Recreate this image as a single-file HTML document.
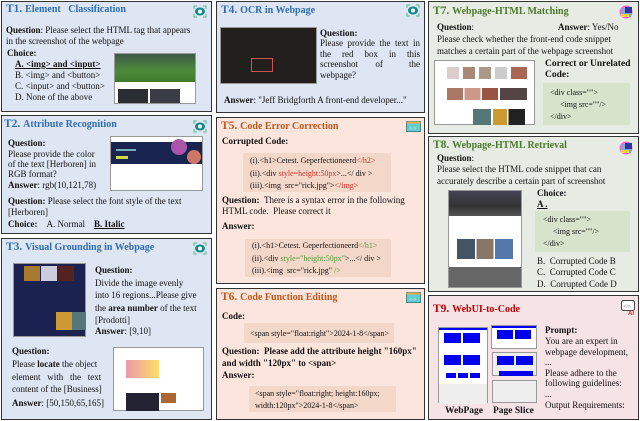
<!DOCTYPE html>
<html><head><meta charset="utf-8"><style>
*{margin:0;padding:0;box-sizing:border-box}
body{width:640px;height:421px;background:#fff;position:relative;overflow:hidden;font-family:"Liberation Serif",serif;color:#111;font-size:9px}
.p{position:absolute;border:1.5px solid #333}
.b{background:#dde6f2}.o{background:#fbe5dc}.g{background:#e6ece3}.r{background:#f6e3e6}
.t{position:absolute;font-weight:bold;font-size:11.5px;white-space:nowrap}
.t span{font-size:10px}
.tb{color:#2f6db3}.to{color:#c4561c}.tg{color:#4c7a2c}.tr{color:#c00000}
.a{position:absolute;white-space:nowrap;line-height:11px}
.bd{font-weight:bold}
.u{text-decoration:underline}
.cb{position:absolute}
.im{position:absolute;border:1px solid #999}
.red{color:#d9302a}.grn{color:#5a9a3a}
.ic{position:absolute}
</style></head><body>

<!-- T1 -->
<div class="p b" style="left:1px;top:1px;width:211px;height:111px"></div>
<div class="t tb" style="left:6px;top:3px">T1. <span>Element &nbsp;&nbsp;Classification</span></div>
<svg class="ic" style="left:193px;top:5px" width="14" height="13"><path d="M1 4V1H4M10 1H13V4M13 9V12H10M4 12H1V9" stroke="#5b8" fill="none"/><ellipse cx="7" cy="6.5" rx="5" ry="4" fill="#158a8a"/><circle cx="7" cy="6.5" r="2" fill="#fff"/></svg>
<div class="a" style="left:6px;top:25px"><b>Question</b>: Please select the HTML tag that appears</div>
<div class="a" style="left:6px;top:36px">in the screenshot of the webpage</div>
<div class="a bd" style="left:7px;top:48px">Choice:</div>
<div class="a bd u" style="left:15px;top:59px">A. &lt;img&gt; and &lt;input&gt;</div>
<div class="a" style="left:15px;top:70px">B. &lt;img&gt; and &lt;button&gt;</div>
<div class="a" style="left:15px;top:81px">C. &lt;input&gt; and &lt;button&gt;</div>
<div class="a" style="left:15px;top:92px">D. None of the above</div>
<div class="im" style="left:114px;top:53px;width:82px;height:51px;background:#fff">
<div style="height:28px;background:linear-gradient(#3c5a48,#4e8a3a 60%,#3d7a2a)"></div>
<div style="position:absolute;left:3px;top:35px;width:30px;height:14px;background:#2a2d33"></div>
<div style="position:absolute;left:35px;top:35px;width:30px;height:14px;background:#3a3d45"></div></div>

<!-- T2 -->
<div class="p b" style="left:1px;top:115px;width:211px;height:119px"></div>
<div class="t tb" style="left:4px;top:118px">T2. <span>Attribute Recognition</span></div>
<svg class="ic" style="left:193px;top:120px" width="14" height="13"><path d="M1 4V1H4M10 1H13V4M13 9V12H10M4 12H1V9" stroke="#5b8" fill="none"/><ellipse cx="7" cy="6.5" rx="5" ry="4" fill="#158a8a"/><circle cx="7" cy="6.5" r="2" fill="#fff"/></svg>
<div class="a bd" style="left:8px;top:138px">Question:</div>
<div class="a" style="left:8px;top:149px">Please provide the color</div>
<div class="a" style="left:8px;top:159px">of the text [Herboren] in</div>
<div class="a" style="left:8px;top:169px">RGB format?</div>
<div class="a" style="left:8px;top:180px"><b>Answer</b>: rgb(10,121,78)</div>
<div class="im" style="left:110px;top:136px;width:93px;height:55px;background:#fff">
<div style="margin-top:5px;height:22px;background:#1a2450;position:relative"><div style="position:absolute;left:5px;top:7px;width:20px;height:2px;background:#7ab"></div><div style="position:absolute;left:5px;top:14px;width:12px;height:3px;background:#cd4"></div><div style="position:absolute;right:15px;top:-3px;width:16px;height:16px;border-radius:50%;background:#a5a"></div><div style="position:absolute;right:1px;top:8px;width:14px;height:14px;border-radius:50%;background:#c76"></div></div></div>
<div class="a" style="left:8px;top:196px"><b>Question:</b> Please select the font style of the text</div>
<div class="a" style="left:8px;top:207px">[Herboren]</div>
<div class="a" style="left:8px;top:219px"><b>Choice:</b> &nbsp;&nbsp;&nbsp;A. Normal &nbsp;&nbsp;&nbsp;<b class="u">B. Italic</b></div>

<!-- T3 -->
<div class="p b" style="left:1px;top:238px;width:211px;height:182px"></div>
<div class="t tb" style="left:6px;top:241px">T3. <span>Visual Grounding in Webpage</span></div>
<svg class="ic" style="left:193px;top:242px" width="14" height="13"><path d="M1 4V1H4M10 1H13V4M13 9V12H10M4 12H1V9" stroke="#5b8" fill="none"/><ellipse cx="7" cy="6.5" rx="5" ry="4" fill="#158a8a"/><circle cx="7" cy="6.5" r="2" fill="#fff"/></svg>
<div class="im" style="left:13px;top:263px;width:73px;height:74px;background:#1c2250">
<div style="position:absolute;left:10px;top:2px;width:16px;height:15px;background:#a77a30"></div><div style="position:absolute;left:27px;top:2px;width:16px;height:15px;background:#ccd"></div><div style="position:absolute;left:44px;top:2px;width:16px;height:15px;background:#522"></div><div style="position:absolute;left:42px;top:48px;width:16px;height:18px;background:#c93"></div><div style="position:absolute;left:58px;top:48px;width:14px;height:18px;background:#577"></div></div>
<div class="a bd" style="left:95px;top:265px">Question:</div>
<div class="a" style="left:95px;top:277px;line-height:12.3px">Divide the image evenly<br>into 16 regions...Please give<br>the <b>area number</b> of the text<br>[Prodotti]</div>
<div class="a" style="left:95px;top:326px"><b>Answer</b>: [9,10]</div>
<div class="a bd" style="left:12px;top:346px">Question:</div>
<div class="a" style="left:12px;top:358px;line-height:12.5px">Please <b>locate</b> the object<br>element &nbsp;&nbsp;with &nbsp;&nbsp;the &nbsp;&nbsp;text<br>content of the [Business]</div>
<div class="a" style="left:12px;top:398px"><b>Answer</b>: [50,150,65,165]</div>
<div class="im" style="left:113px;top:347px;width:91px;height:64px;background:#fff">
<div style="position:absolute;left:12px;top:12px;width:33px;height:18px;background:linear-gradient(90deg,#e9a,#fd6)"></div><div style="position:absolute;left:12px;top:45px;width:33px;height:18px;background:#223"></div><div style="position:absolute;left:47px;top:45px;width:15px;height:10px;background:#a63"></div></div>

<!-- T4 -->
<div class="p b" style="left:216px;top:1px;width:209px;height:112px"></div>
<div class="t tb" style="left:221px;top:4px">T4. <span>OCR in Webpage</span></div>
<svg class="ic" style="left:406px;top:4px" width="14" height="13"><path d="M1 4V1H4M10 1H13V4M13 9V12H10M4 12H1V9" stroke="#5b8" fill="none"/><ellipse cx="7" cy="6.5" rx="5" ry="4" fill="#158a8a"/><circle cx="7" cy="6.5" r="2" fill="#fff"/></svg>
<div class="im" style="left:220px;top:27px;width:97px;height:57px;background:#231f1d">
<div style="position:absolute;left:30px;top:30px;width:22px;height:14px;border:1px solid #c55"></div></div>
<div class="a bd" style="left:320px;top:28px">Question:</div>
<div class="a" style="left:320px;top:38px;line-height:10.5px;text-align:justify;width:100px;white-space:normal">Please provide the text in the red box in this screenshot &nbsp;&nbsp;&nbsp;of &nbsp;&nbsp;&nbsp;&nbsp;&nbsp;the webpage?</div>
<div class="a" style="left:224px;top:95px"><b>Answer</b>: "Jeff Bridgforth A front-end developer..."</div>

<!-- T5 -->
<div class="p o" style="left:216px;top:117px;width:209px;height:167px"></div>
<div class="t to" style="left:221px;top:120px">T5. <span>Code Error Correction</span></div>
<svg class="ic" style="left:406px;top:121px" width="15" height="11"><rect x=".5" y=".5" width="14" height="10" fill="#6cc" stroke="#488"/><rect x=".5" y=".5" width="14" height="2" fill="#ea5"/><text x="3" y="9" font-size="5" fill="#fff">&lt;·&gt;</text></svg>
<div class="a bd" style="left:222px;top:136px">Corrupted Code:</div>
<div class="cb" style="left:243px;top:153px;width:148px;height:39px;background:#f3d7c9"></div>
<div class="a" style="left:250px;top:155px;font-size:8px;line-height:12.5px">(i).&lt;h1&gt;Cetest. Geperfectioneerd<span class="red">&lt;/h2&gt;</span><br>(ii).&lt;div <span class="red">style=height:50px</span>&gt;...&lt;/ div &gt;<br>(iii).&lt;img &nbsp;src="rick.jpg"&gt;<span class="red">&lt;/img&gt;</span></div>
<div class="a" style="left:222px;top:195px"><b>Question:</b> &nbsp;There is a syntax error in the following</div>
<div class="a" style="left:222px;top:206px">HTML code. &nbsp;Please correct it</div>
<div class="a bd" style="left:222px;top:221px">Answer:</div>
<div class="cb" style="left:245px;top:239px;width:146px;height:38px;background:#f3d7c9"></div>
<div class="a" style="left:252px;top:240px;font-size:8px;line-height:12.5px">(i).&lt;h1&gt;Cetest. Geperfectioneerd<span class="grn">&lt;/h1&gt;</span><br>(ii).&lt;div <span class="grn">style="height:50px"</span>&gt;...&lt;/ div &gt;<br>(iii).&lt;img &nbsp;src="rick.jpg" <span class="grn">/&gt;</span></div>

<!-- T6 -->
<div class="p o" style="left:216px;top:288px;width:209px;height:132px"></div>
<div class="t to" style="left:221px;top:291px">T6. <span>Code Function Editing</span></div>
<svg class="ic" style="left:406px;top:292px" width="15" height="11"><rect x=".5" y=".5" width="14" height="10" fill="#6cc" stroke="#488"/><rect x=".5" y=".5" width="14" height="2" fill="#ea5"/><text x="3" y="9" font-size="5" fill="#fff">&lt;·&gt;</text></svg>
<div class="a bd" style="left:222px;top:311px">Code:</div>
<div class="cb" style="left:244px;top:323px;width:150px;height:20px;background:#f3d7c9"></div>
<div class="a" style="left:250px;top:328px;font-size:8px">&lt;span style="float:right"&gt;2024-1-8&lt;/span&gt;</div>
<div class="a bd" style="left:222px;top:346px">Question: &nbsp;Please add the attribute height "160px"</div>
<div class="a bd" style="left:222px;top:358px">and width "120px" to &lt;span&gt;</div>
<div class="a bd" style="left:222px;top:370px">Answer:</div>
<div class="cb" style="left:249px;top:386px;width:147px;height:26px;background:#f3d7c9"></div>
<div class="a" style="left:255px;top:388px;font-size:8px;line-height:11.5px">&lt;span style="float:right; height:160px;<br>width:120px"&gt;2024-1-8&lt;/span&gt;</div>

<!-- T7 -->
<div class="p g" style="left:428px;top:1px;width:211px;height:133px"></div>
<div class="t tg" style="left:433px;top:5px">T7. <span>Webpage-HTML Matching</span></div>
<svg class="ic" style="left:619px;top:5px" width="14" height="14"><circle cx="7" cy="7" r="6.5" fill="#f6c"/><rect x="2" y="3" width="10" height="9" fill="#7ad"/><rect x="6" y="2" width="7" height="6" fill="#339"/><rect x="2" y="9" width="8" height="3" fill="#fc4"/></svg>
<div class="a bd" style="left:437px;top:22px">Question<span style="font-weight:normal">:</span></div>
<div class="a" style="left:558px;top:22px"><b>Answer</b>: Yes/No</div>
<div class="a" style="left:437px;top:34px">Please check whether the front-end code snippet</div>
<div class="a" style="left:437px;top:46px">matches a certain part of the webpage screenshot</div>
<div class="im" style="left:434px;top:60px;width:101px;height:65px;background:#fff">
<div style="position:absolute;left:12px;top:6px;width:80px;height:12px;background:linear-gradient(90deg,#dcc 0 15%,#fff 15% 20%,#a87 20% 35%,#fff 35% 40%,#a98 40% 55%,#fff 55% 60%,#ccc 60% 75%,#fff 75% 80%,#a65 80%)"></div>
<div style="position:absolute;left:12px;top:27px;width:80px;height:12px;background:linear-gradient(90deg,#a76 0 20%,#fff 20% 22%,#c98 22% 42%,#fff 42% 44%,#954 44% 64%,#fff 64% 66%,#544 66% 86%)"></div>
<div style="position:absolute;left:38px;top:48px;width:52px;height:16px;background:linear-gradient(90deg,#577 0 35%,#fff 35% 38%,#c93 38% 65%,#fff 65% 68%,#222 68%)"></div></div>
<div class="a bd" style="left:545px;top:59px;font-size:9.5px">Correct or Unrelated</div>
<div class="a bd" style="left:545px;top:70px;font-size:9.5px">Code:</div>
<div class="cb" style="left:543px;top:83px;width:87px;height:42px;background:#d7e4cb"></div>
<div class="a" style="left:550px;top:87px;font-size:8px;line-height:12px">&lt;div class=""&gt;<br>&nbsp;&nbsp;&nbsp;&nbsp;&nbsp;&lt;img src=""/&gt;<br>&lt;/div&gt;</div>

<!-- T8 -->
<div class="p g" style="left:428px;top:136px;width:211px;height:156px"></div>
<div class="t tg" style="left:433px;top:139px">T8. <span>Webpage-HTML Retrieval</span></div>
<svg class="ic" style="left:619px;top:141px" width="14" height="14"><circle cx="7" cy="7" r="6.5" fill="#f6c"/><rect x="2" y="3" width="10" height="9" fill="#7ad"/><rect x="6" y="2" width="7" height="6" fill="#339"/><rect x="2" y="9" width="8" height="3" fill="#fc4"/></svg>
<div class="a bd" style="left:437px;top:153px">Question<span style="font-weight:normal">:</span></div>
<div class="a" style="left:437px;top:164px">Please select the HTML code snippet that can</div>
<div class="a" style="left:437px;top:176px">accurately describe a certain part of screenshot</div>
<div class="im" style="left:448px;top:190px;width:74px;height:98px;background:#fff">
<div style="height:25px;background:linear-gradient(#445,#333 60%,#555)"></div>
<div style="position:absolute;left:8px;top:48px;width:56px;height:20px;background:linear-gradient(90deg,#456 0 32%,#fff 32% 35%,#876 35% 65%,#fff 65% 68%,#57a 68%)"></div>
<div style="position:absolute;left:0;bottom:0;width:100%;height:20px;background:#666"></div></div>
<div class="a bd" style="left:537px;top:188px">Choice:</div>
<div class="a bd u" style="left:537px;top:199px">A .</div>
<div class="cb" style="left:535px;top:211px;width:95px;height:41px;background:#d7e4cb"></div>
<div class="a" style="left:543px;top:214px;font-size:8px;line-height:12px">&lt;div class=""&gt;<br>&nbsp;&nbsp;&nbsp;&nbsp;&nbsp;&lt;img src=""/&gt;<br>&lt;/div&gt;</div>
<div class="a" style="left:537px;top:256px">B. &nbsp;Corrupted Code B</div>
<div class="a" style="left:537px;top:267px">C. &nbsp;Corrupted Code C</div>
<div class="a" style="left:537px;top:279px">D. &nbsp;Corrupted Code D</div>

<!-- T9 -->
<div class="p r" style="left:428px;top:295px;width:211px;height:125px"></div>
<div class="t tr" style="left:433px;top:303px">T9. <span>WebUI-to-Code</span></div>
<svg class="ic" style="left:621px;top:300px" width="14" height="15"><rect x=".5" y=".5" width="13" height="10" rx="2" fill="#fff" stroke="#444"/><text x="2.5" y="8" font-size="5" fill="#333">&lt;/&gt;</text><text x="7" y="15" font-size="6" font-weight="bold" fill="#d22" font-family="Liberation Sans">AI</text></svg>
<div class="im" style="left:438px;top:327px;width:50px;height:76px;background:#fff">
<div style="height:2px;background:#00f"></div>
<div style="position:absolute;left:5px;top:5px;width:17px;height:10px;background:#00e"></div><div style="position:absolute;left:24px;top:5px;width:17px;height:10px;background:#00e"></div>
<div style="position:absolute;left:5px;top:27px;width:17px;height:10px;background:#00e"></div><div style="position:absolute;left:24px;top:27px;width:17px;height:10px;background:#00e"></div>
<div style="position:absolute;left:7px;top:45px;width:10px;height:5px;background:#00e"></div><div style="position:absolute;left:19px;top:45px;width:10px;height:5px;background:#00e"></div><div style="position:absolute;left:31px;top:45px;width:10px;height:5px;background:#00e"></div>
<div style="position:absolute;left:0;top:56px;width:100%;height:20px;background:#eee"></div></div>
<div class="im" style="left:491px;top:325px;width:46px;height:24px;background:#fff"><div style="height:2px;background:#00f"></div><div style="position:absolute;left:5px;top:4px;width:16px;height:9px;background:#00e"></div><div style="position:absolute;left:23px;top:4px;width:16px;height:9px;background:#00e"></div></div>
<div class="im" style="left:492px;top:352px;width:45px;height:24px;background:#eee"><div style="position:absolute;left:4px;top:3px;width:17px;height:9px;background:#00e"></div><div style="position:absolute;left:23px;top:3px;width:17px;height:9px;background:#00e"></div><div style="position:absolute;left:6px;top:18px;width:34px;height:5px;background:#00e"></div></div>
<div class="im" style="left:492px;top:380px;width:45px;height:23px;background:#eee"></div>
<div class="a bd" style="left:445px;top:406px;font-size:9.5px">WebPage</div>
<div class="a bd" style="left:493px;top:406px;font-size:9.5px">Page Slice</div>
<div class="a bd" style="left:545px;top:325px">Prompt:</div>
<div class="a" style="left:545px;top:336px;line-height:10.6px">You are an expert in<br>webpage development,<br>...<br>Please adhere to the<br>following guidelines:<br>...<br>Output Requirements:</div>

</body></html>
